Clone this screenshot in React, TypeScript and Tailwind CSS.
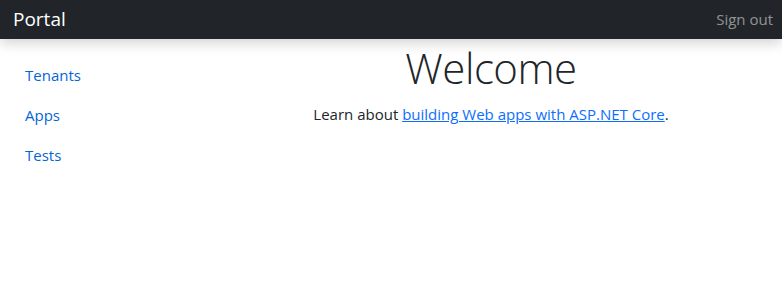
import React from 'react';

const font = { fontFamily: '"Open Sans", "Noto Sans", sans-serif' };

export default function App() {
  return (
    <div className="min-h-[304px] bg-white text-[#212529]" style={font}>
      <header className="h-[39px] bg-[#212529] shadow-[0_4px_12px_rgba(0,0,0,0.18)] flex items-center justify-between px-[13px] relative z-10">
        <span className="text-white text-[19px] leading-none">Portal</span>
        <a href="#" className="text-white/50 text-[15px] leading-none mr-[-4px]">Sign out</a>
      </header>
      <div className="flex">
        <nav className="w-[200px] shrink-0 flex flex-col pt-[24px] pl-[25px]">
          <a href="#" className="text-[#0366d6] text-[15px] h-[40px] leading-[24px]">Tenants</a>
          <a href="#" className="text-[#0366d6] text-[15px] h-[40px] leading-[24px]">Apps</a>
          <a href="#" className="text-[#0366d6] text-[15px] h-[40px] leading-[24px]">Tests</a>
        </nav>
        <main className="flex-1 text-center pt-[2px]">
          <h1 className="font-light text-[42px] leading-[54px] tracking-[-0.5px]">Welcome</h1>
          <p className="text-[15px] leading-[24px] mt-[7px]">
            Learn about{' '}
            <a href="#" className="text-[#0d6efd] underline">building Web apps with ASP.NET Core</a>.
          </p>
        </main>
      </div>
    </div>
  );
}
